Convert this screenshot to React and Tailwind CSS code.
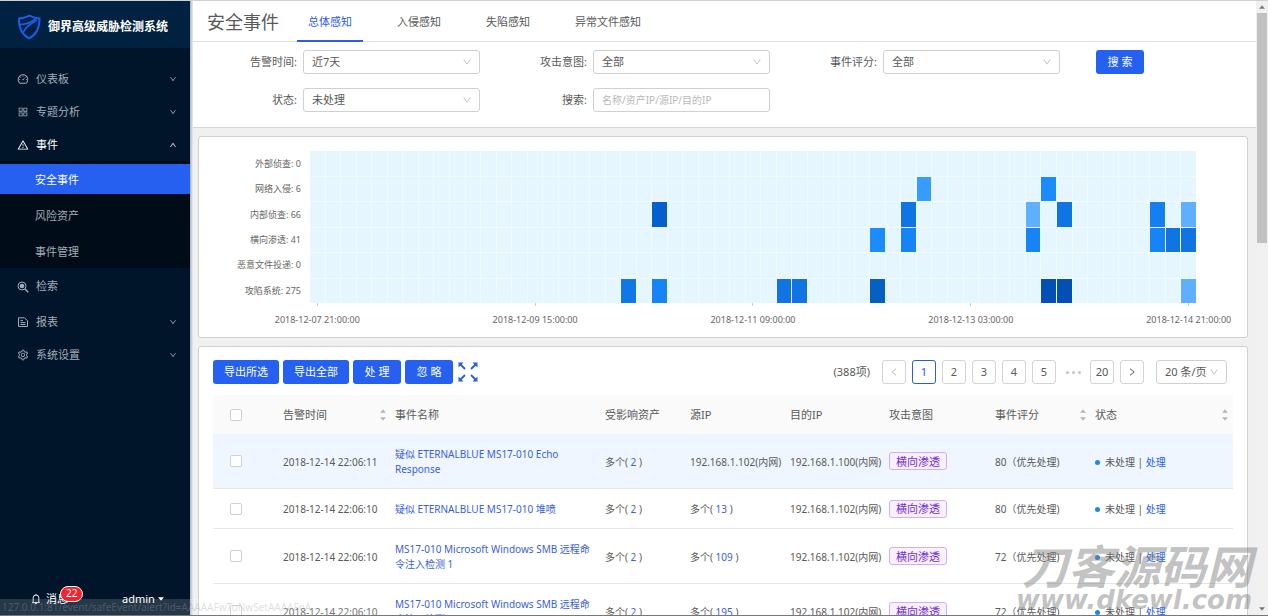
import React, { useState } from "react";
import {
  AiOutlineDashboard,
  AiOutlineAppstore,
  AiOutlineWarning,
  AiOutlineSetting,
  AiOutlineBell,
  AiOutlineDown,
  AiOutlineUp,
  AiOutlineLeft,
  AiOutlineRight,
  AiFillCaretDown,
  AiFillCaretUp,
} from "react-icons/ai";

const SearchIcon = () => (
  <svg viewBox="0 0 12 12" className="size-3" fill="none" stroke="currentColor">
    <circle cx="5" cy="5" r="4" />
    <circle cx="5" cy="5" r="2.3" fill="currentColor" stroke="none" />
    <path d="M8 8l3.2 3.2" strokeWidth="1.4" />
  </svg>
);

const ReportIcon = () => (
  <svg viewBox="0 0 12 12" className="size-3" fill="none" stroke="currentColor">
    <path d="M1.5 1.8h6l3 3v5.7h-9z" />
    <path d="M3.5 4.6h2.5M3.5 6.6h5M3.5 8.5h5" />
  </svg>
);

const Shield = () => (
  <svg viewBox="0 0 24 26" className="h-[26px] w-6 shrink-0" fill="none" stroke="#1d5cf0">
    <path d="M2 4.500C6 4.500 9 3 12.500 1.700 15.500 3.200 19 4.300 22.500 4.500 22.700 13 19.500 20.500 12 24.500 4.500 20 1.500 13 2 4.500z" strokeWidth="1.900" />
    <path d="M3 10.500C9 10.500 14 8.500 18.500 5" strokeWidth="1.600" />
    <path d="M6.500 18C8.500 12.500 14 9.500 20 6" strokeWidth="1.600" />
  </svg>
);

const ExpandIcon = () => (
  <svg viewBox="0 0 20 20" className="size-5" fill="#2560d8" stroke="#2560d8" strokeWidth="1.800">
    <path d="M2 2l5 5M18 2l-5 5M2 18l5-5M18 18l-5-5" />
    <path d="M.5.5h5l-5 5zM19.500.5v5l-5-5zM.5 19.500v-5l5 5zM19.500 19.500h-5l5-5z" stroke="none" />
  </svg>
);

const topMenu = [
  { label: "仪表板", icon: AiOutlineDashboard },
  { label: "专题分析", icon: AiOutlineAppstore },
  { label: "事件", icon: AiOutlineWarning, open: true },
];

const subMenu = ["安全事件", "风险资产", "事件管理"];

const tabs = ["总体感知", "入侵感知", "失陷感知", "异常文件感知"];

const chartRows = [
  { label: "外部侦查: 0", cells: {} },
  { label: "网络入侵: 6", cells: { 39: "#369cff", 47: "#1a8cff" } },
  {
    label: "内部侦查: 66",
    cells: { 22: "#0560cb", 38: "#0f75e4", 46: "#5eb0ff", 48: "#0f75e4", 54: "#147ff0", 56: "#5eb0ff" },
  },
  {
    label: "横向渗透: 41",
    cells: { 36: "#1a8cff", 38: "#1684f7", 46: "#1684f7", 54: "#1684f7", 55: "#1075e2", 56: "#1075e2" },
  },
  { label: "恶意文件投递: 0", cells: {} },
  {
    label: "攻陷系统: 275",
    cells: {
      20: "#0f78e8", 22: "#1684f7", 30: "#1075e2", 31: "#1075e2",
      36: "#0560c4", 47: "#0250b3", 48: "#0250b3", 56: "#5eb0ff",
    },
  },
];

const ticks = [
  { label: "2018-12-07 21:00:00", col: "col-start-1" },
  { label: "2018-12-09 15:00:00", col: "col-start-[15]" },
  { label: "2018-12-11 09:00:00", col: "col-start-[29]" },
  { label: "2018-12-13 03:00:00", col: "col-start-[43]" },
  { label: "2018-12-14 21:00:00", col: "col-start-[57]" },
];

const columns = [
  { label: "告警时间", width: "w-[112px]", sort: true },
  { label: "事件名称", width: "w-[210px]" },
  { label: "受影响资产", width: "w-[85px]" },
  { label: "源IP", width: "w-[100px]" },
  { label: "目的IP", width: "w-[99px]" },
  { label: "攻击意图", width: "w-[106px]" },
  { label: "事件评分", width: "w-[100px]", sort: true },
  { label: "状态", width: "w-[142px]", sort: true },
];

const events = [
  { time: "2018-12-14 22:06:11", name: "疑似 ETERNALBLUE MS17-010 Echo Response", assets: 2, source: "192.168.1.102(内网)", target: "192.168.1.100(内网)", score: 80 },
  { time: "2018-12-14 22:06:10", name: "疑似 ETERNALBLUE MS17-010 堆喷", assets: 2, sourceCount: 13, target: "192.168.1.102(内网)", score: 80 },
  { time: "2018-12-14 22:06:10", name: "MS17-010 Microsoft Windows SMB 远程命令注入检测 1", assets: 2, sourceCount: 109, target: "192.168.1.102(内网)", score: 72 },
  { time: "2018-12-14 22:06:10", name: "MS17-010 Microsoft Windows SMB 远程命令注入检测", assets: 2, sourceCount: 195, target: "192.168.1.102(内网)", score: 72 },
];

const MenuItem = ({ label, icon: Icon, open, leaf }) => (
  <button
    className={`flex w-full shrink-0 items-center gap-[7px] pt-px pr-[13px] pl-[17px] text-[11px] ${leaf ? "h-9" : "h-[33px]"} ${
      open ? "text-white" : "text-[#a3adb8]"
    }`}
  >
    <Icon className="size-3" />
    <span className="flex-1 text-left">{label}</span>
    {!leaf && (open ? <AiOutlineUp className="size-2" /> : <AiOutlineDown className="size-2" />)}
  </button>
);

const Sidebar = () => (
  <aside className="flex w-[190px] shrink-0 flex-col bg-[#001529]">
    <div className="flex h-[47px] items-center gap-[7px] bg-[#002140] pt-1 pl-[17px]">
      <Shield />
      <h1 className="text-[12px] font-bold whitespace-nowrap text-white">御界高级威胁检测系统</h1>
    </div>
    <nav className="mt-[14px] flex flex-col">
      {topMenu.map((item) => (
        <MenuItem key={item.label} {...item} />
      ))}
      <div className="flex flex-col gap-[6px] bg-[#000c17] pt-[3px] pb-[2px]">
        {subMenu.map((label, index) => (
          <a
            key={label}
            href="#"
            className={`flex h-[30px] items-center pt-[2px] pl-[35px] text-[11px] ${
              index === 0 ? "bg-[#2560f0] text-white" : "text-[#a3adb8]"
            }`}
          >
            {label}
          </a>
        ))}
      </div>
      <MenuItem label="检索" icon={SearchIcon} leaf />
      <div className="mt-px flex flex-col">
        <MenuItem label="报表" icon={ReportIcon} />
        <MenuItem label="系统设置" icon={AiOutlineSetting} />
      </div>
    </nav>
    <div className="mt-auto mb-1 flex h-6 items-center pl-[30px] text-[11px] text-white">
      <button className="relative flex w-[92px] items-center gap-1">
        <AiOutlineBell className="size-3" />
        消息
        <span className="absolute -top-[5px] left-[30px] z-20 flex h-4 items-center rounded-full border border-white bg-[#f5222d] px-[5px] text-[10px]">
          22
        </span>
      </button>
      <button className="flex items-center gap-[2px]">
        admin
        <AiFillCaretDown className="size-2" />
      </button>
    </div>
  </aside>
);

const SelectBox = ({ id, options, className = "" }) => (
  <div className={`relative ${className}`}>
    <select
      id={id}
      aria-label={id}
      className="h-6 w-full appearance-none rounded-[3px] border border-[#d0d0d0] bg-white pl-2 text-[11px] text-[#595959]"
    >
      {options.map((option) => (
        <option key={option}>{option}</option>
      ))}
    </select>
    <AiOutlineDown className="pointer-events-none absolute top-[7px] right-2 size-[10px] text-[#b5b5b5]" />
  </div>
);

const Field = ({ id, label, children }) => (
  <div className="flex items-center gap-[6px] pr-[3px]">
    <label htmlFor={id} className="w-[104px] shrink-0 text-right">
      {label}:
    </label>
    {children}
  </div>
);

const Filters = () => (
  <form
    onSubmit={(e) => e.preventDefault()}
    className="grid grid-cols-[290fr_290fr_290fr_193fr] gap-y-[14px] border-b border-[#d4d4d4] bg-white pt-2 pb-[15px] text-[11px]"
  >
    <Field id="time" label="告警时间">
      <SelectBox id="time" options={["近7天", "近30天"]} className="flex-1" />
    </Field>
    <Field id="intent" label="攻击意图">
      <SelectBox id="intent" options={["全部"]} className="flex-1" />
    </Field>
    <Field id="score" label="事件评分">
      <SelectBox id="score" options={["全部"]} className="flex-1" />
    </Field>
    <div className="pl-[33px]">
      <button className="h-6 w-12 rounded-[3px] bg-[#2560f0] text-white">搜 索</button>
    </div>
    <Field id="status" label="状态">
      <SelectBox id="status" options={["未处理", "已处理"]} className="flex-1" />
    </Field>
    <Field id="keyword" label="搜索">
      <input
        id="keyword"
        type="text"
        placeholder="名称/资产IP/源IP/目的IP"
        className="h-6 min-w-0 flex-1 rounded-[3px] border border-[#d0d0d0] px-2 text-[10px] placeholder:text-[#b8b8b8]"
      />
    </Field>
  </form>
);

const HeatMap = () => (
  <section className="rounded-[3px] border border-[#d0d0d0] bg-white pt-[14px] pr-[51px] pb-[10px] text-[9px] text-[#666]">
    <div className="flex h-[152px] gap-[9px]">
      <div className="flex w-[102px] shrink-0 flex-col text-right">
        {chartRows.map((row) => (
          <div key={row.label} className="flex flex-1 items-center justify-end">
            {row.label}
          </div>
        ))}
      </div>
      <div className="flex flex-1 flex-col gap-px bg-[#f0faff]">
        {chartRows.map((row) => (
          <div key={row.label} className="grid flex-1 grid-cols-[repeat(57,minmax(0,1fr))] gap-x-px">
            {Array.from({ length: 57 }, (_, i) => (
              <div key={i} className="bg-[#e5f6ff]" style={row.cells[i] ? { backgroundColor: row.cells[i] } : undefined} />
            ))}
          </div>
        ))}
      </div>
    </div>
    <div className="ml-[111px] grid grid-cols-[repeat(57,minmax(0,1fr))] gap-x-px">
      {ticks.map((tick) => (
        <div key={tick.label} className={`row-start-1 flex flex-col items-center gap-[7px] ${tick.col}`}>
          <span className="h-[3px] w-px bg-[#ccc]" />
          <span className="leading-[14px] whitespace-nowrap">{tick.label}</span>
        </div>
      ))}
    </div>
  </section>
);

const PageButton = ({ active, disabled, label, children }) => (
  <button
    aria-label={label}
    disabled={disabled}
    className={`flex size-6 items-center justify-center rounded-[3px] border ${
      active ? "border-[#2560d8] text-[#2560d8]" : disabled ? "border-[#d4d4d4] text-[#bbb]" : "border-[#d4d4d4]"
    }`}
  >
    {children}
  </button>
);

const Toolbar = () => (
  <div className="flex items-center justify-between pr-[6px] text-[11px]">
    <div className="flex items-center gap-1">
      {["导出所选", "导出全部"].map((label) => (
        <button key={label} className="h-6 w-[66px] rounded-[3px] bg-[#2560f0] text-white">
          {label}
        </button>
      ))}
      {["处 理", "忽 略"].map((label) => (
        <button key={label} className="h-6 w-12 rounded-[3px] bg-[#2560f0] text-white">
          {label}
        </button>
      ))}
      <button aria-label="全屏" className="ml-px">
        <ExpandIcon />
      </button>
    </div>
    <div className="flex items-center gap-[6px]">
      <span className="mr-[6px]">(388项)</span>
      <PageButton disabled label="上一页">
        <AiOutlineLeft className="size-[10px]" />
      </PageButton>
      {[1, 2, 3, 4, 5].map((page) => (
        <PageButton key={page} active={page === 1}>
          {page}
        </PageButton>
      ))}
      <span className="flex w-[22px] items-center justify-center gap-[3px]">
        <i className="size-[3px] rounded-full bg-[#c4c4c4]" />
        <i className="size-[3px] rounded-full bg-[#c4c4c4]" />
        <i className="size-[3px] rounded-full bg-[#c4c4c4]" />
      </span>
      <PageButton>20</PageButton>
      <PageButton label="下一页">
        <AiOutlineRight className="size-[10px]" />
      </PageButton>
      <SelectBox id="每页条数" options={["20 条/页"]} className="ml-[6px] w-[71px]" />
    </div>
  </div>
);

const Checkbox = ({ label, ...props }) => (
  <input
    type="checkbox"
    aria-label={label}
    className="mx-auto block size-3 appearance-none rounded-[2px] border border-[#d0d0d0] bg-white checked:bg-[#2560f0]"
    {...props}
  />
);

const Count = ({ value }) => (
  <>
    多个( <a href="#" className="text-[#3a5fd9]">{value}</a> )
  </>
);

const EventTable = () => {
  const [selected, setSelected] = useState([]);

  const toggle = (index) => {
    setSelected(selected.includes(index) ? selected.filter((i) => i !== index) : [...selected, index]);
  };

  return (
    <table className="mt-[11px] w-full table-fixed text-left text-[10px] leading-[15px]">
      <thead>
        <tr className="h-[39px] bg-[#fafafa] text-[11px]">
          <th className="w-[66px] pr-5">
            <Checkbox
              label="全选"
              checked={selected.length === events.length}
              onChange={(e) => setSelected(e.target.checked ? events.map((_, i) => i) : [])}
            />
          </th>
          {columns.map((col) => (
            <th key={col.label} className={`px-1 font-normal ${col.width}`}>
              <div className="flex items-center justify-between">
                {col.label}
                {col.sort && (
                  <span className="flex flex-col text-[#b5b5b5]">
                    <AiFillCaretUp className="size-2" />
                    <AiFillCaretDown className="size-2" />
                  </span>
                )}
              </div>
            </th>
          ))}
        </tr>
      </thead>
      <tbody>
        {events.map((event, index) => (
          <tr key={index} className={`border-b border-[#e6e6e6] ${index === 0 ? "bg-[#eff6ff]" : ""}`}>
            <td className="pr-5">
              <Checkbox label={event.name} checked={selected.includes(index)} onChange={() => toggle(index)} />
            </td>
            <td className="px-1 pt-[13px] pb-[11px] whitespace-nowrap">{event.time}</td>
            <td className="px-1 pt-[13px] pb-[11px]">
              <a href="#" className="text-[#3a5fd9]">{event.name}</a>
            </td>
            <td className="px-1 pt-[13px] pb-[11px]">
              <Count value={event.assets} />
            </td>
            <td className="px-1 pt-[13px] pb-[11px] whitespace-nowrap">
              {event.source ? event.source : <Count value={event.sourceCount} />}
            </td>
            <td className="px-1 pt-[13px] pb-[11px] whitespace-nowrap">{event.target}</td>
            <td className="px-1">
              <span className="flex h-[18px] w-[58px] items-center justify-center rounded-[3px] border border-[#d3adf7] bg-[#f9f0ff] text-[11px] text-[#722ed1]">
                横向渗透
              </span>
            </td>
            <td className="px-1 pt-[13px] pb-[11px] whitespace-nowrap">{event.score}（优先处理)</td>
            <td className="px-1 pt-[13px] pb-[11px] whitespace-nowrap">
              <span className="flex items-center">
                <i className="mr-[5px] size-[5px] rounded-full bg-[#1e88e5]" />
                未处理 |&nbsp;
                <a href="#" className="text-[#2560f0]">处理</a>
              </span>
            </td>
          </tr>
        ))}
      </tbody>
    </table>
  );
};

const PageScrollbar = () => (
  <div className="flex w-3 shrink-0 flex-col items-center justify-between bg-[#f1f1f1] text-[#777]">
    <div className="flex w-full flex-col items-center">
      <AiFillCaretUp className="my-[2px] size-2" />
      <div className="h-[230px] w-[10px] bg-[#c1c1c1]" />
    </div>
    <AiFillCaretDown className="mb-[2px] size-2" />
  </div>
);

export default function App() {
  return (
    <div className="relative flex h-screen overflow-hidden border-t border-b border-t-[#d0d0d0] border-b-[#777] bg-[#f0f0f0] font-['Noto_Sans','Noto_Sans_CJK_SC',sans-serif] text-[#595959]">
      <Sidebar />
      <div className="w-[3px] shrink-0 bg-linear-to-r from-[#a9b6c8] to-[#ececec]" />
      <main className="min-w-0 flex-1">
        <header className="flex h-[41px] items-stretch gap-[18px] border-b border-[#e0e0e0] bg-white pl-[14px]">
          <h2 className="flex items-center pt-[3px] text-[18px]">安全事件</h2>
          <div className="flex gap-[23px] text-[11px]">
            {tabs.map((tab, index) => (
              <button
                key={tab}
                className={`-mb-px border-b-2 px-[11px] pt-1 ${
                  index === 0 ? "border-[#2f5be0] text-[#2f5be0]" : "border-transparent"
                }`}
              >
                {tab}
              </button>
            ))}
          </div>
        </header>
        <Filters />
        <div className="flex flex-col gap-2 pt-2 pr-2 pl-[5px]">
          <HeatMap />
          <section className="rounded-[3px] border border-[#d0d0d0] bg-white px-[14px] pt-[13px] pb-[14px]">
            <Toolbar />
            <EventTable />
          </section>
        </div>
      </main>
      <PageScrollbar />
      <div className="pointer-events-none absolute bottom-0 left-0 z-10 h-4 w-[396px] overflow-hidden bg-white/15 pl-[2px] text-[10px] leading-4 whitespace-nowrap text-[#98a0a8]/35">
        127.0.0.1:81/event/safeEvent/alert?id=AAAAAFwTuNwSetAAAAFnA
      </div>
      <div className="pointer-events-none absolute right-4 bottom-0 z-10 flex flex-col items-end font-bold text-[#777]/45 italic">
        <span className="text-[46px] leading-[38px]">刀客源码网</span>
        <span className="font-['DejaVu_Sans',sans-serif] text-[26px] leading-[30px]">www.dkewl.com</span>
      </div>
    </div>
  );
}
